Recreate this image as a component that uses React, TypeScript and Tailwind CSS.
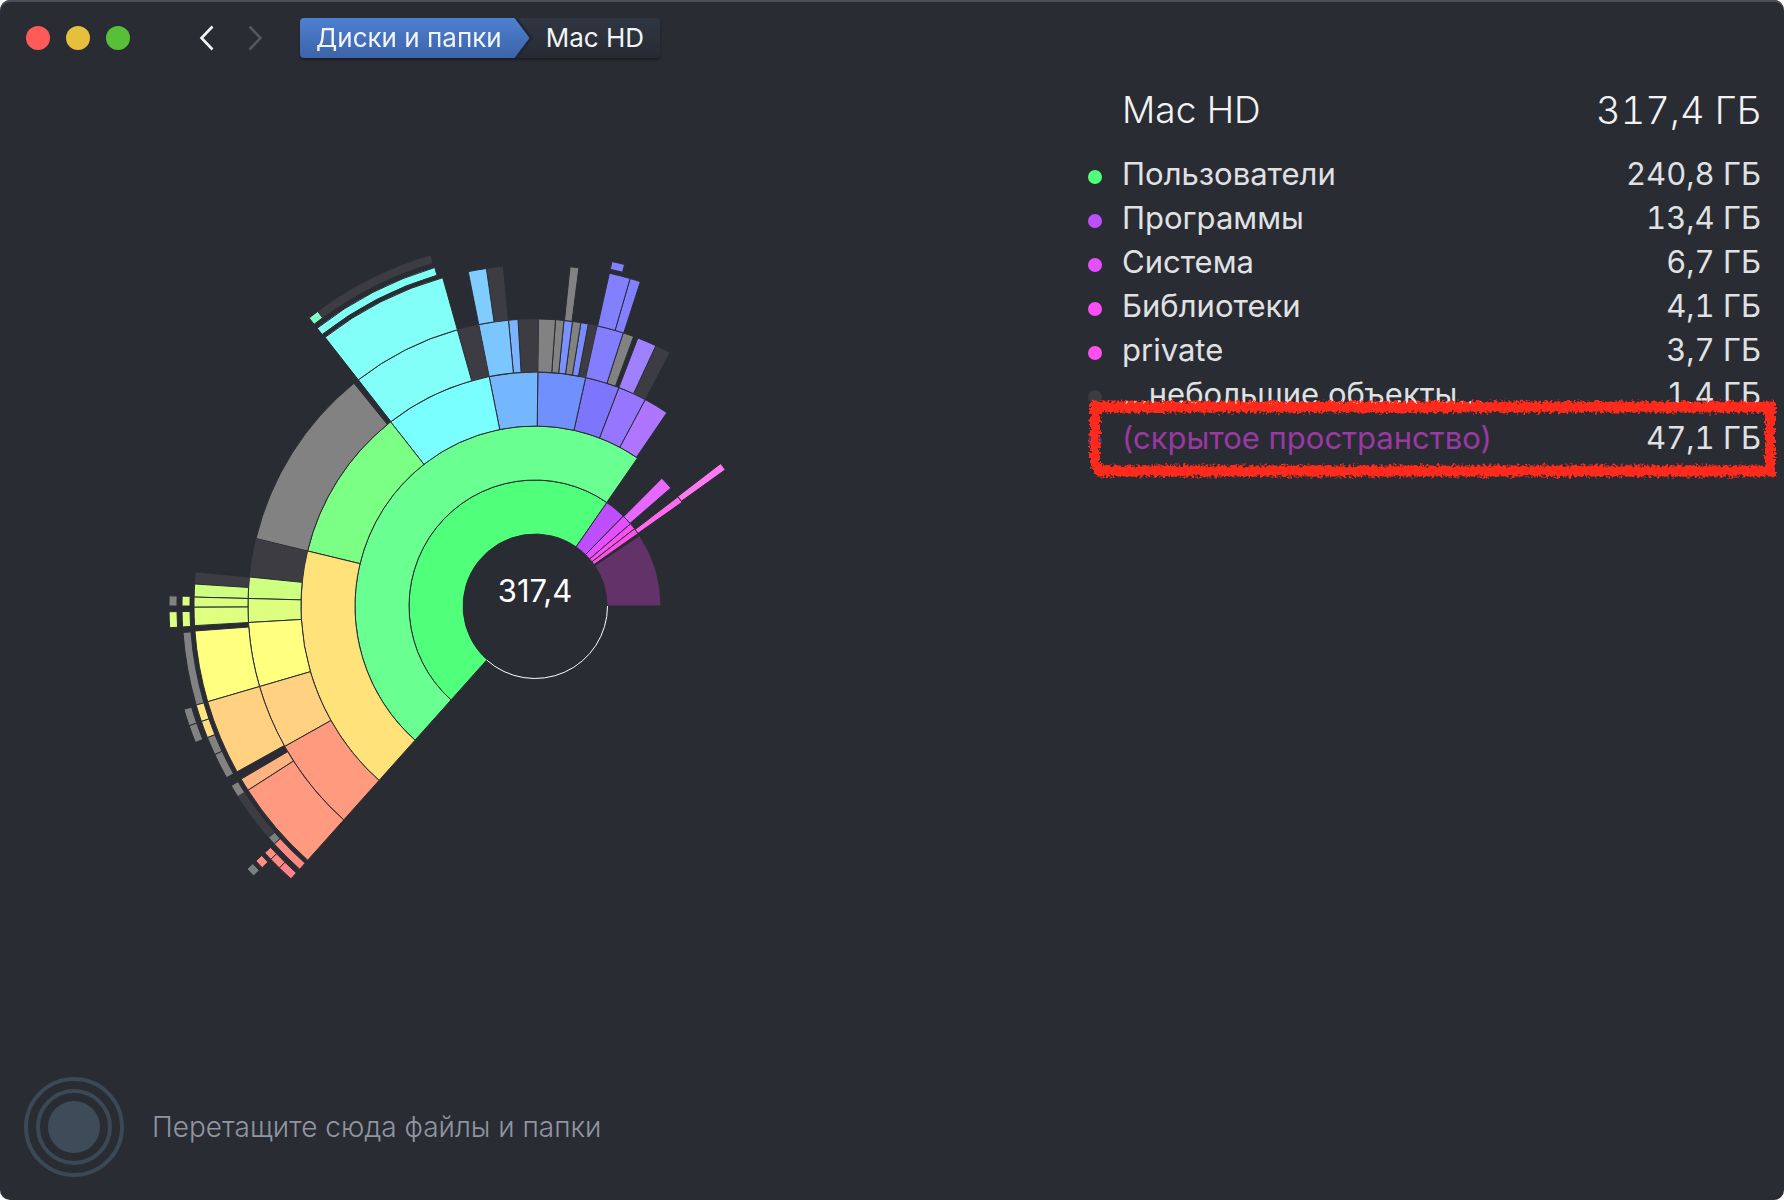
import React from "react";

type Segment = [ring: number, from: number, to: number, color: string];

const RINGS: [number, number][] = [
  [72, 126],
  [126, 180],
  [180, 234],
  [234, 287],
  [287, 341],
  [345, 353],
  [358, 366],
  [370, 378],
  [382, 390],
];

const DARK = "#3c3c42";
const GREY = "#828282";

const SEGMENTS: Segment[] = [
  [0, 55.2, 228.2, "#50ff7a"],
  [0, 45.5, 55.2, "#bd4fff"],
  [0, 40.7, 45.5, "#e64fff"],
  [0, 37.8, 40.7, "#f94ff5"],
  [0, 35.1, 37.8, "#ff4fe8"],
  [0, 0, 34, "#623268"],

  [1, 55.3, 228.2, "#6aff91"],
  [1, 41, 45.2, "#e768ff"],
  [1, 35.2, 37.4, "#ff6af0"],

  [2, 35.6, 37.5, "#ff7af0"],
  [2, 55.7, 61.9, "#b075ff"],
  [2, 61.9, 69, "#9776ff"],
  [2, 69, 77.5, "#7d75fb"],
  [2, 77.5, 89.3, "#7090fd"],
  [2, 89.3, 101.3, "#75b7fe"],
  [2, 101.3, 128.1, "#7affff"],
  [2, 128.1, 166.4, "#7bff84"],
  [2, 166.4, 228.2, "#ffe27a"],

  [3, 62, 65.1, DARK],
  [3, 65.1, 69, "#9f80ff"],
  [3, 69.9, 72.1, GREY],
  [3, 72.1, 77.5, "#827eff"],
  [3, 77.5, 79.3, DARK],
  [3, 79.3, 80.8, "#7a8bff"],
  [3, 80.8, 82.5, GREY],
  [3, 82.5, 84.2, "#7a92ff"],
  [3, 84.2, 85.9, GREY],
  [3, 85.9, 89.3, GREY],
  [3, 89.3, 93.4, DARK],
  [3, 93.4, 95.3, "#7ab4ff"],
  [3, 95.3, 101.3, "#7cc6ff"],
  [3, 101.3, 105.7, DARK],
  [3, 105.7, 128, "#82fff8"],
  [3, 129.1, 166.4, GREY],
  [3, 166.4, 174.2, DARK],
  [3, 174.2, 178.5, "#cdff80"],
  [3, 178.5, 183.3, "#ddff80"],
  [3, 183.3, 196.3, "#ffff80"],
  [3, 196.3, 209.3, "#ffd180"],
  [3, 209.3, 228.2, "#ff9a7f"],

  [4, 72, 73.8, "#8280ff"],
  [4, 73.8, 77.4, "#8280ff"],
  [4, 82.6, 84.1, GREY],
  [4, 95.4, 98.2, DARK],
  [4, 98.2, 101.3, "#80ccff"],
  [4, 105.7, 128, "#82fff6"],
  [4, 174.3, 176.3, DARK],
  [4, 176.3, 178.5, "#ceff80"],
  [4, 178.5, 180.2, "#daff80"],
  [4, 180.2, 183.3, "#dfff80"],
  [4, 184.2, 196.3, "#ffff80"],
  [4, 196.3, 209.1, "#ffd180"],
  [4, 210.5, 212.7, "#ffb380"],
  [4, 212.7, 228.2, "#ff9a80"],

  [5, 75.3, 77.4, "#8280ff"],
  [5, 106.5, 128.1, "#82fff3"],
  [5, 178.4, 180, "#dfff80"],
  [5, 180.9, 183.4, "#dfff80"],
  [5, 184.3, 196.3, GREY],
  [5, 196.3, 199.1, "#ffe680"],
  [5, 199.1, 201.9, "#ffdd80"],
  [5, 201.9, 204.9, GREY],
  [5, 204.9, 209.1, GREY],
  [5, 210.6, 212.7, GREY],
  [5, 212.7, 221, DARK],
  [5, 221, 222.4, "#788080"],
  [5, 222.4, 228.2, "#ff8a82"],

  [6, 106.6, 126.4, DARK],
  [6, 126.4, 128.1, "#80ffc8"],
  [6, 178.4, 180, GREY],
  [6, 180.9, 183.4, "#dfff80"],
  [6, 196.4, 199.1, GREY],
  [6, 199.1, 201.9, GREY],
  [6, 222.4, 223.8, "#ff8d82"],
  [6, 223.8, 225.7, "#ff8a84"],
  [6, 225.7, 228.2, "#ff8088"],

  [7, 222.4, 223.8, "#ff8d82"],
  [8, 222.4, 223.8, "#788080"],
];

function polar(radius: number, degrees: number): string {
  const angle = (degrees * Math.PI) / 180;
  return `${(radius * Math.cos(angle)).toFixed(2)} ${(-radius * Math.sin(angle)).toFixed(2)}`;
}

function sector([ring, from, to]: Segment): string {
  const [inner, outer] = RINGS[ring];
  const large = to - from > 180 ? 1 : 0;
  return `M${polar(outer, from)}A${outer} ${outer} 0 ${large} 0 ${polar(outer, to)}L${polar(inner, to)}A${inner} ${inner} 0 ${large} 1 ${polar(inner, from)}Z`;
}

function Sunburst() {
  return (
    <svg
      viewBox="-449 -449 898 898"
      className="h-auto w-full max-w-[898px]"
      role="img"
      aria-label="Mac HD, 317,4 ГБ"
    >
      {SEGMENTS.map((s, i) => (
        <path key={i} d={sector(s)} fill={s[3]} stroke="#292c33" strokeWidth={s[3] === DARK ? 0 : 1} />
      ))}
      <path
        d={`M${polar(72.5, 0)}A72.5 72.5 0 0 1 ${polar(72.5, 228.2)}`}
        fill="none"
        stroke="#ffffff"
        strokeWidth={1}
      />
      <text x={0} y={-4} textAnchor="middle" fill="#ffffff" className="text-[31px]">
        317,4
      </text>
    </svg>
  );
}

function RoughFrame() {
  return (
    <svg
      className="pointer-events-none absolute -top-4 -right-4 overflow-visible"
      width="688"
      height="78"
      viewBox="0 0 688 78"
      aria-hidden="true"
    >
      <defs>
        <filter id="rough" x="-5%" y="-20%" width="110%" height="140%">
          <feTurbulence type="fractalNoise" baseFrequency="0.35" numOctaves={2} seed={7} result="noise" />
          <feDisplacementMap in="SourceGraphic" in2="noise" scale={9} xChannelSelector="R" yChannelSelector="G" />
        </filter>
      </defs>
      <g filter="url(#rough)" stroke="#ff2a1c" fill="none">
        <path d="M1 7H687" strokeWidth={11} />
        <path d="M9 71H687" strokeWidth={11} />
        <path d="M6 4V64L12 74" strokeWidth={10} />
        <path d="M681 4V76" strokeWidth={10} />
      </g>
    </svg>
  );
}

const ROWS = [
  { name: "Пользователи", size: "240,8 ГБ", dot: "bg-[#50ff7a]" },
  { name: "Программы", size: "13,4 ГБ", dot: "bg-[#bd4fff]" },
  { name: "Система", size: "6,7 ГБ", dot: "bg-[#e64fff]" },
  { name: "Библиотеки", size: "4,1 ГБ", dot: "bg-[#f94ff5]" },
  { name: "private", size: "3,7 ГБ", dot: "bg-[#ff4ff0]" },
  { name: "…небольшие объекты…", size: "1,4 ГБ", dot: "bg-[#3c3c42]" },
  { name: "(скрытое пространство)", size: "47,1 ГБ", dot: "bg-[#623268]", hidden: true },
];

function FolderList() {
  return (
    <table className="w-full border-collapse text-[31px] leading-[44px] font-normal text-[#e0e1e3]">
      <thead>
        <tr className="leading-[68px] text-[#f2f2f3]">
          <td className="w-[34px] p-0" />
          <th scope="col" className="p-0 text-left text-[37px] font-light">Mac HD</th>
          <th scope="col" className="p-0 text-right text-[38px] font-light tabular-nums">317,4 ГБ</th>
        </tr>
        <tr aria-hidden="true">
          <td colSpan={3} className="h-2 p-0" />
        </tr>
      </thead>
      <tbody>
        {ROWS.map((row) => (
          <tr key={row.name} className="relative">
            <td className="p-0">
              <span className={`mt-[5px] block size-[14px] rounded-full ${row.dot}`} />
            </td>
            <td className={row.hidden ? "p-0 whitespace-nowrap text-[#9a39a2]" : "p-0 whitespace-nowrap"}>{row.name}</td>
            <td className="p-0 text-right whitespace-nowrap tabular-nums">
              {row.size}
              {row.hidden && <RoughFrame />}
            </td>
          </tr>
        ))}
      </tbody>
    </table>
  );
}

function Toolbar() {
  return (
    <header className="flex h-[76px] items-center pl-[26px]">
      <div className="flex gap-4">
        <button aria-label="Закрыть" className="size-6 rounded-full bg-[#ff5b59]" />
        <button aria-label="Свернуть" className="size-6 rounded-full bg-[#e6bf3c]" />
        <button aria-label="Развернуть" className="size-6 rounded-full bg-[#57c038]" />
      </div>
      <div className="ml-[67px] flex gap-[31px]">
        <button aria-label="Назад" className="text-[#f4f5f6]">
          <svg width="18" height="28" viewBox="0 0 18 28" fill="none" stroke="currentColor" strokeWidth="2.6">
            <path d="M15.5 2.5L4.5 14L15.5 25.5" />
          </svg>
        </button>
        <button aria-label="Вперёд" disabled className="text-[#54575e]">
          <svg width="18" height="28" viewBox="0 0 18 28" fill="none" stroke="currentColor" strokeWidth="2.6">
            <path d="M3.5 2.5L14.5 14L3.5 25.5" />
          </svg>
        </button>
      </div>
      <nav
        aria-label="Путь"
        className="ml-[36px] flex h-10 overflow-hidden rounded bg-linear-to-b from-[#303742] to-[#272a32] text-[26px] leading-10 text-[#f2f4f7] shadow-[0_2px_2px_#1c1e22]"
      >
        <span className="flex drop-shadow-[2px_0_1px_#1c1f26]">
          <a
            href="#disks"
            className="bg-linear-to-b from-[#4d80d2] to-[#3d64a8] pr-[28px] pl-4 [clip-path:polygon(0_0,calc(100%-15px)_0,100%_50%,calc(100%-15px)_100%,0_100%)]"
          >
            Диски и папки
          </a>
        </span>
        <a href="#mac-hd" className="px-4">Mac HD</a>
      </nav>
    </header>
  );
}

export default function App() {
  return (
    <div className="min-h-screen bg-white font-['Inter','Liberation_Sans',sans-serif]">
      <div className="flex min-h-screen flex-col overflow-hidden rounded-[10px] bg-[#292c33] shadow-[inset_0_2px_0_#4b4f57]">
        <Toolbar />
        <main className="flex flex-1">
          <div className="flex flex-1 items-start justify-center pt-[81px]">
            <Sunburst />
          </div>
          <aside className="w-[714px] pr-[23px] pl-[18px]">
            <FolderList />
          </aside>
        </main>
        <footer className="flex items-center gap-[28px] px-6 pb-[23px]">
          <svg width="100" height="100" viewBox="-50 -50 100 100" fill="none" stroke="#3b4855" strokeWidth="4" aria-hidden="true">
            <circle r="48" />
            <circle r="36" />
            <circle r="26" fill="#3e4c59" stroke="none" />
          </svg>
          <p className="text-[28px] font-light text-[#9095a1]">Перетащите сюда файлы и папки</p>
        </footer>
      </div>
    </div>
  );
}
